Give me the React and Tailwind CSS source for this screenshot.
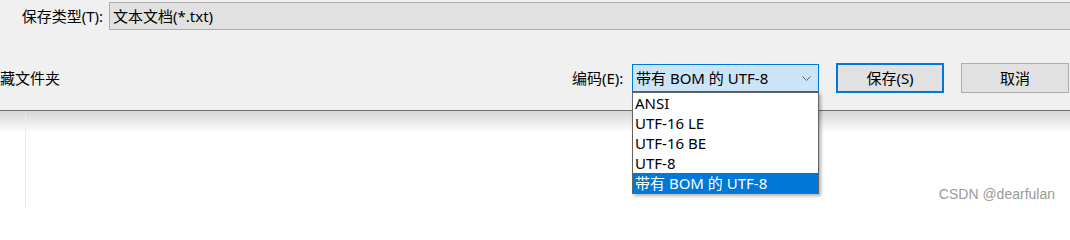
import React from 'react';

const items = ['ANSI', 'UTF-16 LE', 'UTF-16 BE', 'UTF-8', '带有 BOM 的 UTF-8'];

export default function App() {
    return (
        <div
            className="relative h-[209px] w-[1070px] overflow-hidden bg-white text-[15px] text-black"
            style={{ fontFamily: '"Noto Sans", "Noto Sans CJK SC", sans-serif' }}
        >
            <div className="h-[111px] border-b border-[#6e6e6e] bg-[#f0f0f0]">
                <div className="flex items-center pt-[2px]">
                    <span className="w-[109px] pr-[6px] text-right leading-none">保存类型(T):</span>
                    <div className="flex h-[28px] flex-1 items-center border border-[#adadad] bg-[#e1e1e1] pl-[3px] -mr-[2px]">
                        文本文档(*.txt)
                    </div>
                </div>
                <div className="mt-[33px] flex items-center">
                    <span className="w-[572px] leading-none">藏文件夹</span>
                    <span className="w-[60px] leading-none">编码(E):</span>
                    <div className="flex h-[28px] w-[187px] items-center justify-between border border-[#0078d7] bg-[#cce4f7] pl-[3px] pr-[7px]">
                        <span>带有 BOM 的 UTF-8</span>
                        <svg width="9" height="5" viewBox="0 0 9 5" fill="none">
                            <polyline points="0.5,0.5 4.5,4.5 8.5,0.5" stroke="#606060" strokeWidth="1" />
                        </svg>
                    </div>
                    <button className="ml-[17px] flex h-[30px] w-[108px] items-center justify-center border-2 border-[#0078d7] bg-[#e1e1e1]">
                        保存(S)
                    </button>
                    <button className="ml-[17px] flex h-[30px] w-[108px] items-center justify-center border border-[#adadad] bg-[#e1e1e1]">
                        取消
                    </button>
                </div>
            </div>

            <div className="relative h-[98px]">
                <div className="h-[22px] bg-gradient-to-b from-[#d6d6d6] to-white" />
                <div className="absolute left-[25px] top-0 h-full w-px bg-[#ececec]" />
            </div>

            <div className="absolute left-[632px] top-[92px] w-[187px] border border-[#646464] bg-white shadow-[2px_2px_3px_rgba(0,0,0,0.3)]">
                {items.map((item, i) => (
                    <div
                        key={item}
                        className={
                            i === items.length - 1
                                ? 'flex h-[20px] items-center bg-[#0078d7] pl-[2px] text-white'
                                : 'flex h-[20px] items-center pl-[2px]'
                        }
                    >
                        {item}
                    </div>
                ))}
            </div>

            <div
                className="absolute right-[15px] top-[187px] text-[14px] leading-none text-[#9a9a9a]"
                style={{ fontFamily: '"Liberation Sans", Arial, sans-serif' }}
            >
                CSDN @dearfulan
            </div>
        </div>
    );
}
